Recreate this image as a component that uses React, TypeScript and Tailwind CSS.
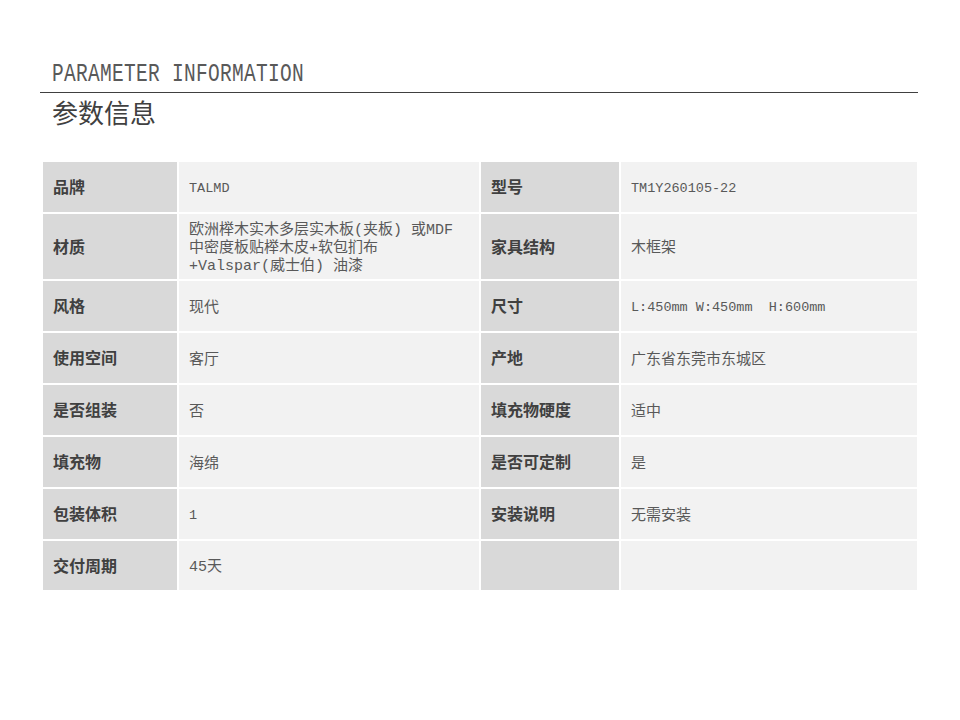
import React from 'react'

type Cell = { label: string; value: string; mono?: boolean }

const rows: [Cell, Cell][] = [
    [{ label: '品牌', value: 'TALMD', mono: true }, { label: '型号', value: 'TM1Y260105-22', mono: true }],
    [{ label: '材质', value: '欧洲榉木实木多层实木板(夹板) 或MDF\n中密度板贴榉木皮+软包扪布\n+Valspar(威士伯) 油漆' }, { label: '家具结构', value: '木框架' }],
    [{ label: '风格', value: '现代' }, { label: '尺寸', value: 'L:450mm W:450mm  H:600mm', mono: true }],
    [{ label: '使用空间', value: '客厅' }, { label: '产地', value: '广东省东莞市东城区' }],
    [{ label: '是否组装', value: '否' }, { label: '填充物硬度', value: '适中' }],
    [{ label: '填充物', value: '海绵' }, { label: '是否可定制', value: '是' }],
    [{ label: '包装体积', value: '1', mono: true }, { label: '安装说明', value: '无需安装' }],
    [{ label: '交付周期', value: '45天' }, { label: '', value: '' }],
]

const cjk = "font-['Liberation_Mono','Noto_Sans_CJK_SC',monospace]"

function Label({ text }: { text: string }) {
    return (
        <div className="flex items-center bg-[#d9d9d9] pl-[10px] pb-[2px] text-[16px] leading-[20px] font-bold text-[#404040] font-['Noto_Sans_CJK_SC',sans-serif]">
            {text}
        </div>
    )
}

function Value({ cell }: { cell: Cell }) {
    return (
        <div className={`flex items-center bg-[#f2f2f2] pl-[10px] text-[#595959] ${cjk}`}>
            {cell.mono ? (
                <span className="pt-[4px] text-[13.5px] leading-[18px] whitespace-pre">{cell.value}</span>
            ) : (
                <span className="pt-[5px] text-[15px] leading-[18px] whitespace-pre-line">{cell.value}</span>
            )}
        </div>
    )
}

export default function App() {
    return (
        <div className="w-[960px] h-[720px] bg-white pt-[60px]">
            <div className="ml-[40px] w-[878px]">
                <div className="pl-[12px] h-[32px] flex items-center">
                    <span className="inline-block origin-center scale-y-[1.3] text-[19.5px] tracking-[0.3px] text-[#595959] font-['Liberation_Mono',monospace]">
                        PARAMETER INFORMATION
                    </span>
                </div>
                <div className="border-t border-[#404040]" />
                <div className="pl-[12px] pt-[1px] text-[26px] leading-[36px] text-[#404040] font-['Noto_Sans_CJK_SC',sans-serif]">
                    参数信息
                </div>
            </div>
            <div className="ml-[43px] mt-[32px] grid grid-cols-[134px_300px_138px_296px] gap-x-[2px] gap-y-[2px] grid-rows-[50px_65px_50px_50px_50px_50px_50px_49px]">
                {rows.map((r, i) => (
                    <React.Fragment key={i}>
                        <Label text={r[0].label} />
                        <Value cell={r[0]} />
                        <Label text={r[1].label} />
                        <Value cell={r[1]} />
                    </React.Fragment>
                ))}
            </div>
        </div>
    )
}
